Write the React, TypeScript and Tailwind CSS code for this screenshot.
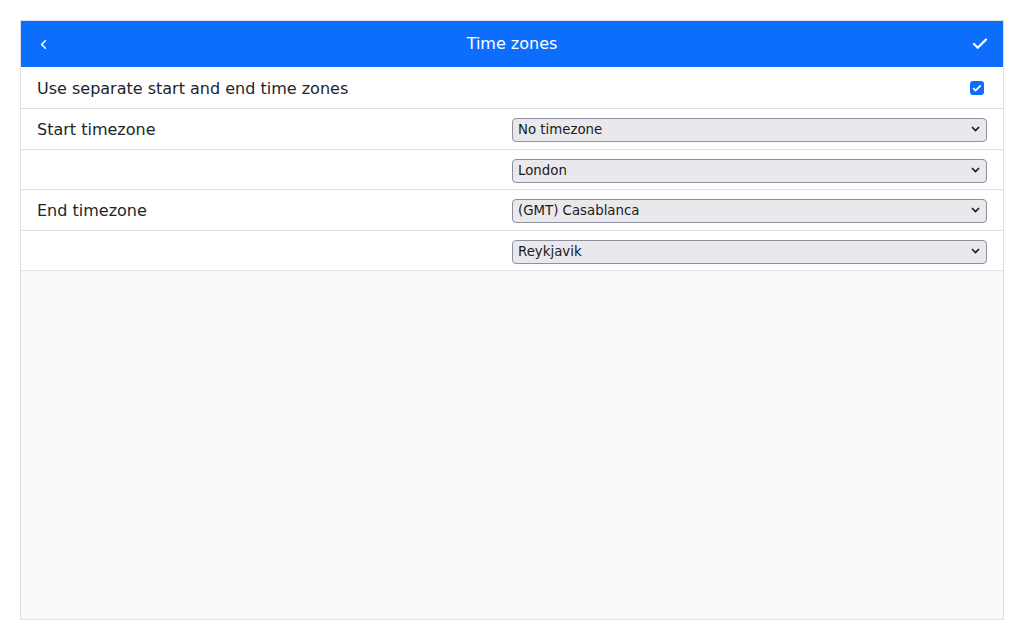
import { ChevronLeft, Check } from "lucide-react";

const font = { fontFamily: '"DejaVu Sans", Verdana, sans-serif' };

function Select({ value }: { value: string }) {
  return (
    <div className="relative w-full">
      <select
        defaultValue={value}
        className="w-full h-6 appearance-none rounded-[4px] border border-[#8f8f9d] bg-[#e9e9ed] pl-[5px] pr-6 text-[13.333px] leading-[22px] text-[#1a1a1a] outline-none"
        style={font}
      >
        <option>{value}</option>
      </select>
      <svg
        className="pointer-events-none absolute right-[7px] top-[9px]"
        width="9"
        height="6"
        viewBox="0 0 9 6"
        fill="none"
      >
        <path d="M1 1l3.5 3.5L8 1" stroke="#1a1a1a" strokeWidth="1.6" />
      </svg>
    </div>
  );
}

function Row({ label, value }: { label?: string; value: string }) {
  return (
    <div className={`flex items-center border-b border-[#dee2e6] ${label ? "h-[41px]" : "h-[40px]"}`}>
      <div className="w-1/2 pl-4 pt-[2px] text-[16px] text-[#212529]">{label}</div>
      <div className="w-1/2 pr-[16px] pt-[1px]">
        <Select value={value} />
      </div>
    </div>
  );
}

export default function App() {
  return (
    <div className="min-h-screen bg-white p-5" style={font}>
      <div className="flex h-[600px] flex-col border border-[#dee2e6] bg-[#f9f9f9]">
        <div className="flex h-[46px] items-center bg-[#0d6efd] px-[16px] text-white">
          <div className="flex w-[24px] items-center">
            <ChevronLeft className="h-[15px] w-[15px] ml-[-1px]" strokeWidth={2.5} />
          </div>
          <span className="flex-1 text-center text-[16px]">Time zones</span>
          <div className="flex w-[24px] items-center justify-end">
            <Check className="h-[18px] w-[18px] mr-[-2px]" strokeWidth={3} />
          </div>
        </div>
        <div className="bg-white">
          <div className="flex h-[42px] items-center justify-between border-b border-[#dee2e6] pl-4 pr-[18px]">
            <span className="pt-[2px] text-[16px] text-[#212529]">Use separate start and end time zones</span>
            <span className="mr-[1px] flex h-[14px] w-[14px] items-center justify-center rounded-[3px] bg-[#0d6efd]">
              <svg width="10" height="8" viewBox="0 0 10 8" fill="none">
                <path d="M1.2 4.2l2.4 2.4L8.8 1.4" stroke="white" strokeWidth="1.8" />
              </svg>
            </span>
          </div>
          <Row label="Start timezone" value="No timezone" />
          <Row value="London" />
          <Row label="End timezone" value="(GMT) Casablanca" />
          <Row value="Reykjavik" />
        </div>
      </div>
    </div>
  );
}
